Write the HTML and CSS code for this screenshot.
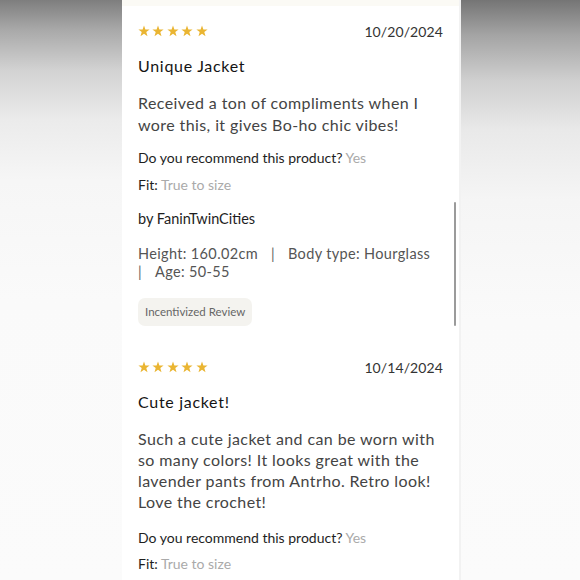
FILE: index.html
```html
<!DOCTYPE html>
<html>
<head>
<meta charset="utf-8">
<link rel="stylesheet" href="styles.css">
</head>
<body>
<div class="stage">
  <div class="side side-left"></div>
  <main class="panel">
    <div class="topstrip"></div>
    <article class="review">
      <div class="head">
        <div class="stars">
          <svg viewBox="0 0 12 12"><polygon points="6,0.5 7.4,4.4 11.6,4.5 8.3,7.1 9.5,11.2 6,8.8 2.5,11.2 3.7,7.1 0.4,4.5 4.6,4.4"/></svg>
          <svg viewBox="0 0 12 12"><polygon points="6,0.5 7.4,4.4 11.6,4.5 8.3,7.1 9.5,11.2 6,8.8 2.5,11.2 3.7,7.1 0.4,4.5 4.6,4.4"/></svg>
          <svg viewBox="0 0 12 12"><polygon points="6,0.5 7.4,4.4 11.6,4.5 8.3,7.1 9.5,11.2 6,8.8 2.5,11.2 3.7,7.1 0.4,4.5 4.6,4.4"/></svg>
          <svg viewBox="0 0 12 12"><polygon points="6,0.5 7.4,4.4 11.6,4.5 8.3,7.1 9.5,11.2 6,8.8 2.5,11.2 3.7,7.1 0.4,4.5 4.6,4.4"/></svg>
          <svg viewBox="0 0 12 12"><polygon points="6,0.5 7.4,4.4 11.6,4.5 8.3,7.1 9.5,11.2 6,8.8 2.5,11.2 3.7,7.1 0.4,4.5 4.6,4.4"/></svg>
        </div>
        <div class="date">10/20/2024</div>
      </div>
      <h2 class="title">Unique Jacket</h2>
      <p class="body">Received a ton of compliments when I wore this, it gives Bo-ho chic vibes!</p>
      <p class="qa">Do you recommend this product? <span class="val">Yes</span></p>
      <p class="qa fit">Fit: <span class="val">True to size</span></p>
      <p class="author">by FaninTwinCities</p>
      <p class="meta"><span class="line">Height: 160.02cm<span class="sep">|</span>Body type: Hourglass</span><span class="line"><span class="sep first">|</span>Age: 50-55</span></p>
      <span class="badge">Incentivized Review</span>
    </article>
    <article class="review second">
      <div class="head">
        <div class="stars">
          <svg viewBox="0 0 12 12"><polygon points="6,0.5 7.4,4.4 11.6,4.5 8.3,7.1 9.5,11.2 6,8.8 2.5,11.2 3.7,7.1 0.4,4.5 4.6,4.4"/></svg>
          <svg viewBox="0 0 12 12"><polygon points="6,0.5 7.4,4.4 11.6,4.5 8.3,7.1 9.5,11.2 6,8.8 2.5,11.2 3.7,7.1 0.4,4.5 4.6,4.4"/></svg>
          <svg viewBox="0 0 12 12"><polygon points="6,0.5 7.4,4.4 11.6,4.5 8.3,7.1 9.5,11.2 6,8.8 2.5,11.2 3.7,7.1 0.4,4.5 4.6,4.4"/></svg>
          <svg viewBox="0 0 12 12"><polygon points="6,0.5 7.4,4.4 11.6,4.5 8.3,7.1 9.5,11.2 6,8.8 2.5,11.2 3.7,7.1 0.4,4.5 4.6,4.4"/></svg>
          <svg viewBox="0 0 12 12"><polygon points="6,0.5 7.4,4.4 11.6,4.5 8.3,7.1 9.5,11.2 6,8.8 2.5,11.2 3.7,7.1 0.4,4.5 4.6,4.4"/></svg>
        </div>
        <div class="date">10/14/2024</div>
      </div>
      <h2 class="title">Cute jacket!</h2>
      <p class="body">Such a cute jacket and can be worn with so many colors! It looks great with the lavender pants from Antrho. Retro look! Love the crochet!</p>
      <p class="qa">Do you recommend this product? <span class="val">Yes</span></p>
      <p class="qa fit">Fit: <span class="val">True to size</span></p>
    </article>
    <div class="scrollbar"></div>
  </main>
  <div class="side side-right"></div>
</div>
</body>
</html>
```
FILE: styles.css
```css
html, body {
  margin: 0;
  padding: 0;
  background: #fafafa;
}
body {
  font-family: Lato, "Noto Sans", sans-serif;
  color: #333;
}
.stage {
  display: flex;
  width: 580px;
  height: 580px;
  overflow: hidden;
}
.side {
  height: 580px;
}
.side-left {
  width: 122px;
  background: linear-gradient(#7e7e7e 0px, #a9a9a9 30px, #d2d2d2 70px, #ebebeb 120px, #f6f6f6 180px, #fafafa 300px, #fbfbfb 580px);
}
.side-right {
  flex: 1;
  background: linear-gradient(#757575 0px, #a4a4a4 35px, #cfcfcf 80px, #e9e9e9 130px, #f5f5f5 200px, #fafafa 320px, #fbfbfb 580px);
  border-left: 2px solid #f2f2f2;
}
.panel {
  position: relative;
  width: 337px;
  background: #ffffff;
  box-sizing: border-box;
  padding: 0 16px;
}
.topstrip {
  height: 6px;
  margin: 0 -16px;
  background: #fbfaf5;
}
.review {
  padding-top: 15px;
}
.review.second {
  padding-top: 31px;
}
.head {
  display: flex;
  justify-content: space-between;
  align-items: center;
  height: 20px;
}
.stars {
  display: flex;
  gap: 2.4px;
}
.stars svg {
  width: 12px;
  height: 12px;
  fill: #eab532;
}
.date {
  font-size: 14px;
  letter-spacing: 0.1px;
  color: #333;
}
.title {
  margin: 14px 0 0;
  font-size: 16px;
  line-height: 22px;
  font-weight: 400;
  letter-spacing: 0.7px;
  color: #141414;
}
.body {
  margin: 15px 0 0;
  font-size: 16px;
  line-height: 21.5px;
  letter-spacing: 0.4px;
  color: #444;
}
.second .body {
  line-height: 21px;
}
.qa {
  margin: 13px 0 0;
  font-size: 14px;
  line-height: 20px;
  color: #1e1e1e;
}
.qa.fit {
  margin-top: 7px;
}
.second .qa {
  margin-top: 16px;
}
.second .qa.fit {
  margin-top: 6px;
}
.val {
  color: #aaa;
}
.author {
  margin: 14px 0 0;
  font-size: 14.5px;
  line-height: 20px;
  color: #1e1e1e;
}
.meta {
  margin: 16px 0 0;
  font-size: 14.5px;
  line-height: 18px;
  letter-spacing: 0.35px;
  color: #555;
}
.meta .line {
  display: block;
  white-space: nowrap;
}
.sep {
  margin: 0 13px;
  color: #666;
}
.sep.first {
  margin: 0 13px 0 0;
}
.badge {
  display: inline-block;
  margin-top: 17px;
  height: 28px;
  line-height: 28px;
  padding: 0 7px;
  background: #f4f3ef;
  border-radius: 7px;
  font-size: 11.5px;
  color: #666;
}
.scrollbar {
  position: absolute;
  left: 332px;
  top: 202px;
  width: 2px;
  height: 124px;
  background: #9b9b9b;
  border-radius: 1px;
}
```
